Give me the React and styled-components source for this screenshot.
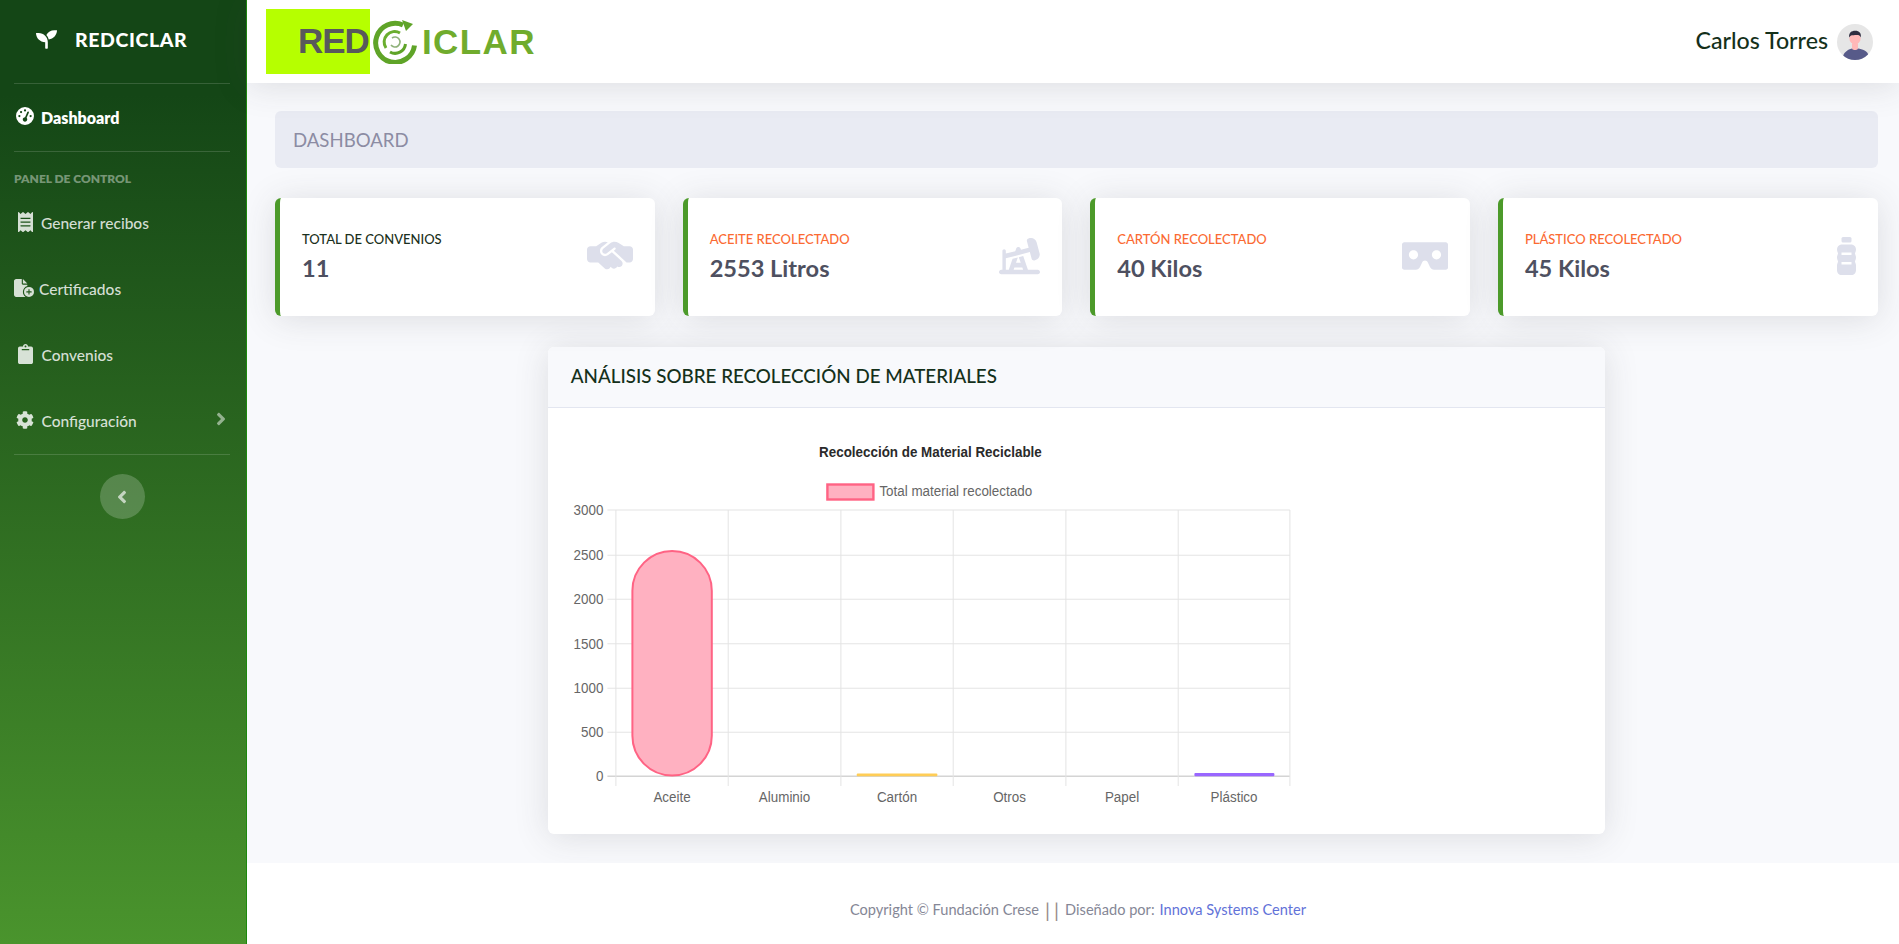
import React from "react";
import styled, { createGlobalStyle } from "styled-components";
import { FaSeedling, FaReceipt, FaClipboard, FaCog, FaAngleRight, FaAngleLeft, FaVrCardboard } from "react-icons/fa";
import { FaFileCirclePlus, FaOilWell, FaGaugeHigh, FaHandshakeSimple } from "react-icons/fa6";

const SANS = '"Lato", "Open Sans", "Noto Sans", sans-serif';

const Global = createGlobalStyle`
  html, body { margin: 0; padding: 0; height: 100%; background: #f8f9fc; }
  body { font-family: ${SANS}; overflow: hidden; }
  * { box-sizing: border-box; }
`;

const Shell = styled.div`
  display: flex;
  width: 1899px;
  height: 944px;
  overflow: hidden;
`;

const Sidebar = styled.aside`
  width: 247px;
  flex: none;
  padding: 0 16px 0 14px;
  background: linear-gradient(180deg, #144616 10%, #4a942d 100%);
  border-right: 1px solid #1b8a0c;
  display: flex;
  flex-direction: column;
`;

const Brand = styled.div`
  height: 83px;
  display: flex;
  align-items: center;
  padding: 0 0 4px 22px;
  gap: 18px;
  color: #fff;
  font-size: 19.5px;
  font-weight: 900;
  letter-spacing: 0.6px;
  svg { width: 21px; height: 21px; }
`;

const Divider = styled.hr`
  width: 100%;
  margin: 0;
  border: 0;
  border-top: 1px solid rgba(255, 255, 255, 0.15);
`;

const ActiveItem = styled.div`
  height: 67px;
  display: flex;
  align-items: center;
  gap: 7px;
  padding-left: 2px;
  color: #fff;
  font-size: 16px;
  font-weight: 800;
  svg { width: 18px; height: 18px; margin-top: -3px; }
`;

const Heading = styled.div`
  margin-top: 20px;
  height: 14px;
  line-height: 14px;
  color: rgba(255, 255, 255, 0.42);
  font-size: 12px;
  font-weight: 800;
  text-transform: uppercase;
`;

const NavList = styled.nav`
  padding-top: 4px;
`;

const NavItem = styled.div`
  height: 66px;
  display: flex;
  align-items: center;
  color: rgba(255, 255, 255, 0.82);
  font-size: 15.5px;
  font-weight: 500;
  gap: ${(p) => p.$gap ?? 8}px;
  padding-left: ${(p) => p.$pad ?? 4}px;
  svg:first-child { width: ${(p) => p.$size ?? 18}px; height: 20px; margin-top: -3px; flex: none; }
`;

const Chevron = styled.span`
  margin-left: auto;
  display: flex;
  color: rgba(255, 255, 255, 0.5);
  margin-top: -2px;
  svg { width: 16px; height: 20px; }
`;

const Toggle = styled.button`
  align-self: center;
  margin-top: 19px;
  width: 45px;
  height: 45px;
  border: 0;
  padding: 0;
  border-radius: 50%;
  background: rgba(255, 255, 255, 0.2);
  color: rgba(255, 255, 255, 0.65);
  display: flex;
  align-items: center;
  justify-content: center;
  svg { width: 16px; height: 20px; }
`;

const Main = styled.main`
  flex: 1;
  display: flex;
  flex-direction: column;
  min-width: 0;
`;

const Topbar = styled.header`
  height: 83px;
  flex: none;
  background: #fff;
  box-shadow: 0 3px 34px rgba(58, 59, 69, 0.15);
  display: flex;
  align-items: center;
  justify-content: space-between;
  padding: 0 26px 0 19px;
  position: relative;
`;

const Logo = styled.div`
  display: flex;
  align-items: center;
  font-family: "Liberation Sans", Arial, sans-serif;
  font-size: 35px;
  font-weight: 700;
`;

const LogoRed = styled.span`
  width: 104px;
  height: 65px;
  padding-left: 32px;
  margin-top: -1px;
  background: #b6ff00;
  color: #58595b;
  display: flex;
  align-items: center;
  letter-spacing: -1px;
`;

const LogoMark = styled.svg`
  width: 48px;
  height: 44px;
  margin-left: 1px;
  flex: none;
`;

const LogoEnd = styled.span`
  color: #70ac2d;
  margin-left: 3px;
  letter-spacing: 1.4px;
`;

const User = styled.div`
  display: flex;
  align-items: center;
  gap: 9px;
  color: #14301a;
  font-size: 23.2px;
  font-weight: 500;
`;

const UserName = styled.span`
  margin-top: -3px;
`;

const Avatar = styled.svg`
  width: 36px;
  height: 36px;
`;

const Content = styled.div`
  flex: 1;
  padding: 28px 21.5px 29px 28px;
`;

const TitleBar = styled.div`
  height: 57px;
  background: #e9ebf3;
  border-radius: 6px;
  padding-left: 18px;
  display: flex;
  align-items: center;
  color: #8c8ca3;
  font-size: 18.6px;
`;

const Cards = styled.div`
  display: grid;
  grid-template-columns: repeat(4, 1fr);
  column-gap: 28px;
  margin-top: 30px;
`;

const StatCard = styled.section`
  height: 118px;
  background: #fff;
  border-left: 5px solid #4c9a2a;
  border-radius: 6px;
  box-shadow: 0 3px 34px rgba(58, 59, 69, 0.15);
  padding: 0 ${(p) => p.$iconPad}px 0 22px;
  display: flex;
  align-items: center;
  justify-content: space-between;
`;

const StatText = styled.div`
  display: flex;
  flex-direction: column;
  gap: 8px;
  margin-top: -2px;
`;

const StatLabel = styled.div`
  color: ${(p) => (p.$accent ? "#fb6a32" : "#1a3020")};
  font-size: 13px;
  font-weight: 500;
  line-height: 16px;
  text-transform: uppercase;
`;

const StatValue = styled.div`
  color: #4e5060;
  font-size: 23.6px;
  font-weight: 700;
  line-height: 27px;
`;

const StatIcon = styled.span`
  color: #dddfeb;
  display: flex;
  margin-top: -3px;
  svg { width: ${(p) => p.$w}px; height: ${(p) => p.$h}px; }
`;

const ChartCard = styled.section`
  width: 1057px;
  margin: 31px auto 0;
  background: #fff;
  border-radius: 6px;
  box-shadow: 0 3px 34px rgba(58, 59, 69, 0.15);
  overflow: hidden;
`;

const ChartHeader = styled.div`
  height: 61px;
  background: #f8f9fc;
  border-bottom: 1px solid #e3e6f0;
  padding: 0 0 3px 23px;
  display: flex;
  align-items: center;
  color: #14301a;
  font-size: 18.8px;
  font-weight: 500;
`;

const ChartBody = styled.div`
  height: 426px;
`;

const ChartSvg = styled.svg`
  display: block;
  width: 1057px;
  height: 426px;
  font-family: "Liberation Sans", Arial, sans-serif;
`;

const Footer = styled.footer`
  height: 81px;
  flex: none;
  background: #fff;
  display: flex;
  align-items: center;
  justify-content: center;
  gap: 5px;
  padding: 12px 0 0 10px;
  color: #858796;
  font-size: 14.6px;
`;

const Pipes = styled.span`
  color: #9a8c8c;
  font-size: 20px;
  line-height: 20px;
  letter-spacing: 4px;
  margin: 0 -3px 0 1px;
`;

const FooterLink = styled.span`
  color: #6272d8;
`;

/* Chart coordinates are measured on the page; the origin is the card body's corner */
const OX = 547.6;
const OY = 408;
const yTicks = [
  [3000, 510], [2500, 555.3], [2000, 599.3], [1500, 643.8], [1000, 688.3], [500, 732.3], [0, 776.3],
];
const xLines = [615.5, 727.8, 840.5, 952.8, 1065.5, 1177.8, 1289.5];
const labels = ["Aceite", "Aluminio", "Cartón", "Otros", "Papel", "Plástico"];

function ChartText({ x, y, anchor = "start", size = 14.5, weight = 400, fill = "#666", children }) {
  return (
    <text
      transform={`translate(${x - OX} ${y - OY}) scale(0.925 1)`}
      textAnchor={anchor}
      fontSize={size}
      fontWeight={weight}
      fill={fill}
    >
      {children}
    </text>
  );
}

function Chart() {
  const x = (v) => v - OX;
  const y = (v) => v - OY;
  return (
    <ChartSvg viewBox="0 0 1057 426">
      <ChartText x={930} y={456.5} anchor="middle" weight={700} fill="#2a2a2a">
        Recolección de Material Reciclable
      </ChartText>
      <rect x={x(827)} y={y(484.5)} width="46" height="15" fill="#ffb1c1" stroke="#ff6384" strokeWidth="2.4" />
      <ChartText x={879} y={495.5}>Total material recolectado</ChartText>
      {yTicks.map(([v, py]) => (
        <g key={v}>
          <line x1={x(607)} x2={x(1289.5)} y1={y(py)} y2={y(py)} stroke={v === 0 ? "#d4d4d4" : "#e4e4e4"} strokeWidth={v === 0 ? 1.6 : 1.1} />
          <ChartText x={603} y={py + 5} anchor="end">{v}</ChartText>
        </g>
      ))}
      {xLines.map((px) => (
        <line key={px} x1={x(px)} x2={x(px)} y1={y(510)} y2={y(786)} stroke="#e4e4e4" strokeWidth="1" />
      ))}
      {labels.map((l, i) => (
        <ChartText key={l} x={(xLines[i] + xLines[i + 1]) / 2} y={802} anchor="middle">{l}</ChartText>
      ))}
      <rect x={x(632)} y={y(551)} width="79.4" height="224.5" rx="39.7" fill="#ffb1c1" stroke="#ff6384" strokeWidth="2" />
      <rect x={x(856.3)} y={y(773.6)} width="80.7" height="2.6" rx="1" fill="#ffcd56" />
      <rect x={x(1194)} y={y(773)} width="80" height="3.3" rx="1" fill="#9966ff" />
    </ChartSvg>
  );
}

/* The ridged water bottle of the last card */
function BottleIcon() {
  return (
    <svg viewBox="0 0 19 38">
      <rect x="4.5" y="0" width="10" height="5.5" rx="1.5" fill="currentColor" />
      <path
        fill="currentColor"
        fillRule="evenodd"
        d="M4 7.5 H15 C17.5 8 19 10 19 12.5 C19 14.5 18 15.5 18 16.5 C18 17.5 19 18.5 19 20.5 C19 22.5 18 23.5 18 24.5 C18 25.5 19 26.5 19 28.5 V33 C19 36 17 38 14.5 38 H4.5 C2 38 0 36 0 33 V28.5 C0 26.5 1 25.5 1 24.5 C1 23.5 0 22.5 0 20.5 C0 18.5 1 17.5 1 16.5 C1 15.5 0 14.5 0 12.5 C0 10 1.5 8 4 7.5 Z M4.5 15.5 V18 H14.5 V15.5 Z M4.5 25 V27.5 H14.5 V25 Z"
      />
    </svg>
  );
}

const stats = [
  { label: "Total de convenios", value: "11", Icon: FaHandshakeSimple, w: 46, h: 37, pad: 22 },
  { label: "Aceite recolectado", value: "2553 Litros", Icon: FaOilWell, w: 41, h: 38, pad: 22, accent: true },
  { label: "Cartón recolectado", value: "40 Kilos", Icon: FaVrCardboard, w: 46, h: 38, pad: 22, accent: true },
  { label: "Plástico recolectado", value: "45 Kilos", Icon: BottleIcon, w: 19, h: 38, pad: 22, accent: true },
];

export default function App() {
  return (
    <Shell>
      <Global />
      <Sidebar>
        <Brand>
          <FaSeedling />
          REDCICLAR
        </Brand>
        <Divider />
        <ActiveItem>
          <FaGaugeHigh />
          Dashboard
        </ActiveItem>
        <Divider />
        <Heading>Panel de control</Heading>
        <NavList>
          <NavItem $pad={4} $gap={8} $size={15}><FaReceipt />Generar recibos</NavItem>
          <NavItem $pad={0} $gap={5} $size={20}><FaFileCirclePlus />Certificados</NavItem>
          <NavItem $pad={4} $gap={8.5} $size={15}><FaClipboard />Convenios</NavItem>
          <NavItem $pad={2} $gap={7.5} $size={18}>
            <FaCog />Configuración
            <Chevron><FaAngleRight /></Chevron>
          </NavItem>
        </NavList>
        <Divider />
        <Toggle aria-label="Contraer"><FaAngleLeft /></Toggle>
      </Sidebar>
      <Main>
        <Topbar>
          <Logo>
            <LogoRed>RED</LogoRed>
            <LogoMark viewBox="0 0 48 44">
              <path d="M32 5 A19.5 19.5 0 1 0 43.5 25.5" fill="none" stroke="#5fa428" strokeWidth="5" />
              <path d="M31 0 L42 4 L35 11 Z" fill="#5fa428" />
              <path d="M29 13 A10.5 10.5 0 0 0 15 28" fill="none" stroke="#6aae2f" strokeWidth="3" />
              <path d="M19 32 A10.5 10.5 0 0 0 34.5 24" fill="none" stroke="#5fa428" strokeWidth="3" />
              <path d="M21 18 A5 5 0 1 1 20 25" fill="none" stroke="#8fb27a" strokeWidth="1.6" />
            </LogoMark>
            <LogoEnd>ICLAR</LogoEnd>
          </Logo>
          <User>
            <UserName>Carlos Torres</UserName>
            <Avatar viewBox="0 0 36 36">
              <circle cx="18" cy="18" r="18" fill="#e6e6e6" />
              <clipPath id="av"><circle cx="18" cy="18" r="18" /></clipPath>
              <g clipPath="url(#av)">
                <path d="M5 36 C6 28 11 25.5 15 24.5 L21 24.5 C25 25.5 31 26 32 33 L30 36 Z" fill="#575a89" />
                <rect x="15" y="18" width="6" height="8" rx="2.5" fill="#ffb8b8" />
                <circle cx="18" cy="14.5" r="5.6" fill="#ffb8b8" />
                <path d="M12.2 13.5 C11.5 8.5 15 6.6 18.5 6.8 C22 6.8 24.5 9 23.8 13.5 C22.8 11.2 21.5 10.8 19 11 C16 11.3 13.5 10.8 12.2 13.5 Z" fill="#2f2e41" />
              </g>
            </Avatar>
          </User>
        </Topbar>
        <Content>
          <TitleBar>DASHBOARD</TitleBar>
          <Cards>
            {stats.map(({ label, value, Icon, w, h, pad, accent }) => (
              <StatCard key={label} $iconPad={pad}>
                <StatText>
                  <StatLabel $accent={accent}>{label}</StatLabel>
                  <StatValue>{value}</StatValue>
                </StatText>
                <StatIcon $w={w} $h={h}><Icon /></StatIcon>
              </StatCard>
            ))}
          </Cards>
          <ChartCard>
            <ChartHeader>ANÁLISIS SOBRE RECOLECCIÓN DE MATERIALES</ChartHeader>
            <ChartBody><Chart /></ChartBody>
          </ChartCard>
        </Content>
        <Footer>
          Copyright © Fundación Crese <Pipes>||</Pipes> Diseñado por: <FooterLink>Innova Systems Center</FooterLink>
        </Footer>
      </Main>
    </Shell>
  );
}
